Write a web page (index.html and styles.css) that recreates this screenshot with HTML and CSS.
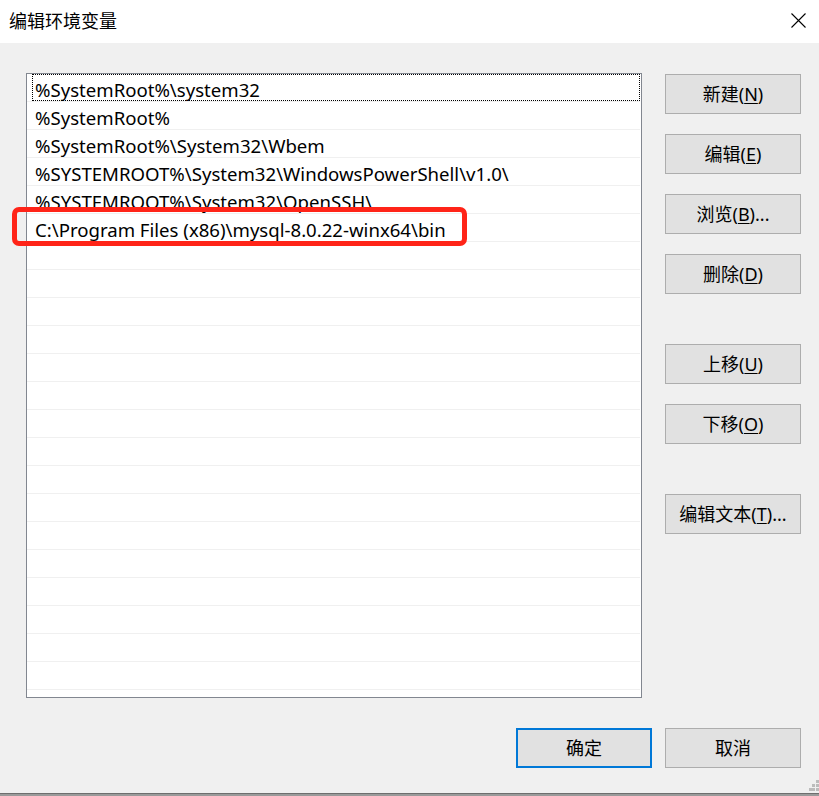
FILE: index.html
```html
<!DOCTYPE html>
<html lang="zh-CN">
<head>
<meta charset="utf-8">
<title>编辑环境变量</title>
<link rel="stylesheet" href="styles.css">
</head>
<body>
<div class="window">
  <div class="titlebar">
    <div class="title">编辑环境变量</div>
    <div class="close">
      <svg width="15" height="15" viewBox="0 0 15 15"><path d="M0.5 0.5 L14.5 14.5 M14.5 0.5 L0.5 14.5" stroke="#000" stroke-width="1.1" fill="none"/></svg>
    </div>
  </div>
  <div class="main">
    <div class="listwrap">
      <div class="list">
        <div class="row"><div class="cell focus">%SystemRoot%\system32</div></div>
        <div class="row"><div class="cell">%SystemRoot%</div></div>
        <div class="row"><div class="cell">%SystemRoot%\System32\Wbem</div></div>
        <div class="row"><div class="cell">%SYSTEMROOT%\System32\WindowsPowerShell\v1.0\</div></div>
        <div class="row"><div class="cell">%SYSTEMROOT%\System32\OpenSSH\</div></div>
        <div class="row"><div class="cell">C:\Program Files (x86)\mysql-8.0.22-winx64\bin</div></div>
        <div class="row"></div><div class="row"></div><div class="row"></div><div class="row"></div>
        <div class="row"></div><div class="row"></div><div class="row"></div><div class="row"></div>
        <div class="row"></div><div class="row"></div><div class="row"></div><div class="row"></div>
        <div class="row"></div><div class="row"></div><div class="row"></div><div class="row"></div>
      </div>
      <div class="mark"></div>
    </div>
    <div class="side">
      <div class="group">
        <button class="btn">新建(<u>N</u>)</button>
        <button class="btn">编辑(<u>E</u>)</button>
        <button class="btn">浏览(<u>B</u>)...</button>
        <button class="btn">删除(<u>D</u>)</button>
      </div>
      <div class="group">
        <button class="btn">上移(<u>U</u>)</button>
        <button class="btn">下移(<u>O</u>)</button>
      </div>
      <div class="group">
        <button class="btn">编辑文本(<u>T</u>)...</button>
      </div>
    </div>
  </div>
  <div class="footer">
    <button class="btn primary">确定</button>
    <button class="btn">取消</button>
  </div>
  <div class="bottomline"></div>
  <div class="grip">
    <span style="left:7px;top:0"></span>
    <span style="left:3px;top:4px"></span><span style="left:7px;top:4px"></span>
    <span style="left:0;top:8px"></span><span style="left:3px;top:8px"></span><span style="left:7px;top:8px"></span>
  </div>
</div>
</body>
</html>
```
FILE: styles.css
```css
* { box-sizing: border-box; }
html, body { margin: 0; padding: 0; }
body {
  background: #f0f0f0;
  font-family: "Noto Sans", "Noto Sans CJK SC", sans-serif;
  color: #000;
}
.window {
  position: relative;
  width: 819px;
  height: 796px;
  display: flex;
  flex-direction: column;
  overflow: hidden;
}
.titlebar {
  height: 43px;
  background: #fff;
  display: flex;
  align-items: flex-start;
}
.title {
  font-family: "Noto Sans CJK SC", sans-serif;
  font-size: 18px;
  line-height: 24px;
  margin: 8px 0 0 9px;
}
.close {
  margin: 13px 13px 0 auto;
  width: 15px;
  height: 15px;
  display: flex;
}
.main {
  display: flex;
  padding: 30px 0 0 26px;
}
.listwrap {
  position: relative;
}
.list {
  width: 616px;
  height: 625px;
  border: 1px solid #828790;
  background: #fff;
  overflow: hidden;
}
.row {
  height: 28px;
  border-bottom: 1px solid #f0f0f0;
  padding-left: 5px;
  margin: 0 1px 0 0;
}
.cell {
  height: 27px;
  border: 1px dotted transparent;
  padding: 2px 0 0 2px;
  font-size: 18.6px;
  line-height: 25px;
  white-space: nowrap;
}
.cell.focus {
  border-color: #000;
}
.mark {
  position: absolute;
  left: -14px;
  top: 134px;
  width: 455px;
  height: 39px;
  border: 5px solid #ff2418;
  border-radius: 7px;
}
.side {
  margin-left: 23px;
  padding-top: 1px;
  display: flex;
  flex-direction: column;
  gap: 50px;
}
.group {
  display: flex;
  flex-direction: column;
  gap: 20px;
}
.btn {
  width: 136px;
  height: 40px;
  background: #e1e1e1;
  border: 1px solid #adadad;
  font-family: "Noto Sans", "Noto Sans CJK SC", sans-serif;
  font-size: 18px;
  color: #000;
  padding: 0;
  line-height: 36px;
}
.btn u { text-underline-offset: 2px; }
.btn.primary {
  border: 2px solid #0078d7;
}
.footer {
  display: flex;
  justify-content: flex-end;
  gap: 13px;
  padding-right: 18px;
  margin-top: 30px;
}
.bottomline {
  margin-top: auto;
  height: 3px;
  background: #9a9a9a;
  border-top: 1px solid #6e6e6e;
}
.grip {
  position: absolute;
  right: 0;
  bottom: 5px;
  width: 10px;
  height: 11px;
}
.grip span {
  position: absolute;
  width: 3px;
  height: 3px;
  background: #bcbcbc;
}
```
